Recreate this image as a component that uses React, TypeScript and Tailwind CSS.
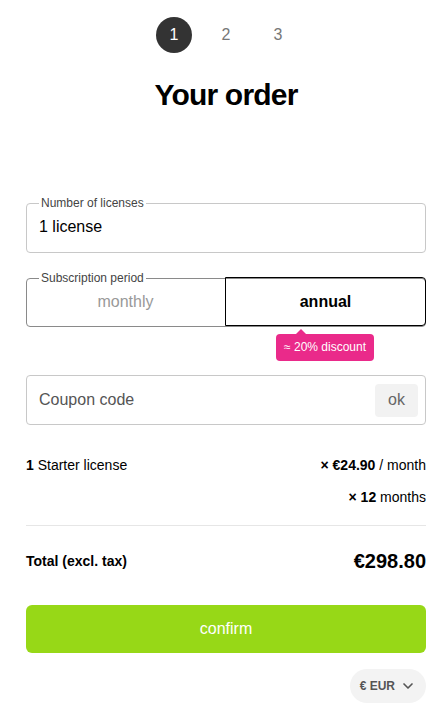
import { ChevronDown } from 'lucide-react';

export default function App() {
  return (
    <div className="min-h-screen bg-white font-['Liberation_Sans',Arial,sans-serif] text-black">
      <div className="ml-[26px] w-[400px] pt-[17px] pb-[9px]">
        {/* steps */}
        <div className="flex items-center justify-center gap-4">
          <div className="flex h-9 w-9 items-center justify-center rounded-full bg-[#333] text-base text-white">1</div>
          <div className="flex h-9 w-9 items-center justify-center text-base text-[#777]">2</div>
          <div className="flex h-9 w-9 items-center justify-center text-base text-[#777]">3</div>
        </div>

        <h1 className="mt-[24px] text-center text-[30px] leading-[36px] font-bold tracking-[-0.8px]">Your order</h1>

        {/* licenses */}
        <fieldset className="mt-[83px] h-[57px] rounded border border-[#c8c8c8] px-3">
          <legend className="px-[2px] text-xs leading-[14px] text-[#444]">Number of licenses</legend>
          <div className="pt-[5px] text-base">1 license</div>
        </fieldset>

        {/* period */}
        <fieldset className="mt-[18px] h-[56px] rounded border border-[#8a8a8a]">
          <legend className="ml-3 px-[2px] text-xs leading-[14px] text-[#444]">Subscription period</legend>
          <div className="-mx-px -mb-px -mt-[8px] flex h-[49px]">
            <button className="flex-1 text-base text-[#999]">monthly</button>
            <button className="flex-1 rounded-r border border-black text-base font-bold">annual</button>
          </div>
        </fieldset>

        <div className="relative mt-[7px] flex justify-end pr-[52px]">
          <div className="relative rounded bg-[#ea2a8a] px-[8px] py-[6px] text-xs leading-[15px] text-white">
            ≈ 20% discount
            <span className="absolute -top-[5px] left-[20px] h-0 w-0 border-x-[5px] border-b-[5px] border-x-transparent border-b-[#ea2a8a]" />
          </div>
        </div>

        {/* coupon */}
        <div className="mt-[14px] flex h-[50px] items-center rounded border border-[#c8c8c8] pl-3 pr-[7px]">
          <span className="flex-1 text-base text-[#555]">Coupon code</span>
          <button className="h-[33px] w-[43px] rounded bg-[#f2f2f2] text-base text-[#666]">ok</button>
        </div>

        {/* summary */}
        <div className="mt-[32px] flex items-center justify-between text-sm leading-4">
          <span><b>1</b> Starter license</span>
          <span><b>× €24.90</b> / month</span>
        </div>
        <div className="mt-[16px] flex justify-end text-sm leading-4">
          <span><b>× 12</b> months</span>
        </div>
        <div className="mt-[20px] h-px bg-[#e6e6e6]" />
        <div className="mt-[20px] flex items-center justify-between">
          <span className="text-sm font-bold">Total (excl. tax)</span>
          <span className="text-[20px] font-bold">€298.80</span>
        </div>

        <button className="mt-[29px] flex h-[48px] w-full items-center justify-center rounded-md bg-[#97d817] text-base text-white">
          confirm
        </button>

        <div className="mt-[16px] flex justify-end">
          <button className="flex h-[34px] items-center gap-[5px] rounded-full bg-[#f3f3f3] px-[10px] text-xs font-bold text-[#555]">
            € EUR
            <ChevronDown className="h-4 w-4" strokeWidth={2.5} />
          </button>
        </div>
      </div>
    </div>
  );
}
